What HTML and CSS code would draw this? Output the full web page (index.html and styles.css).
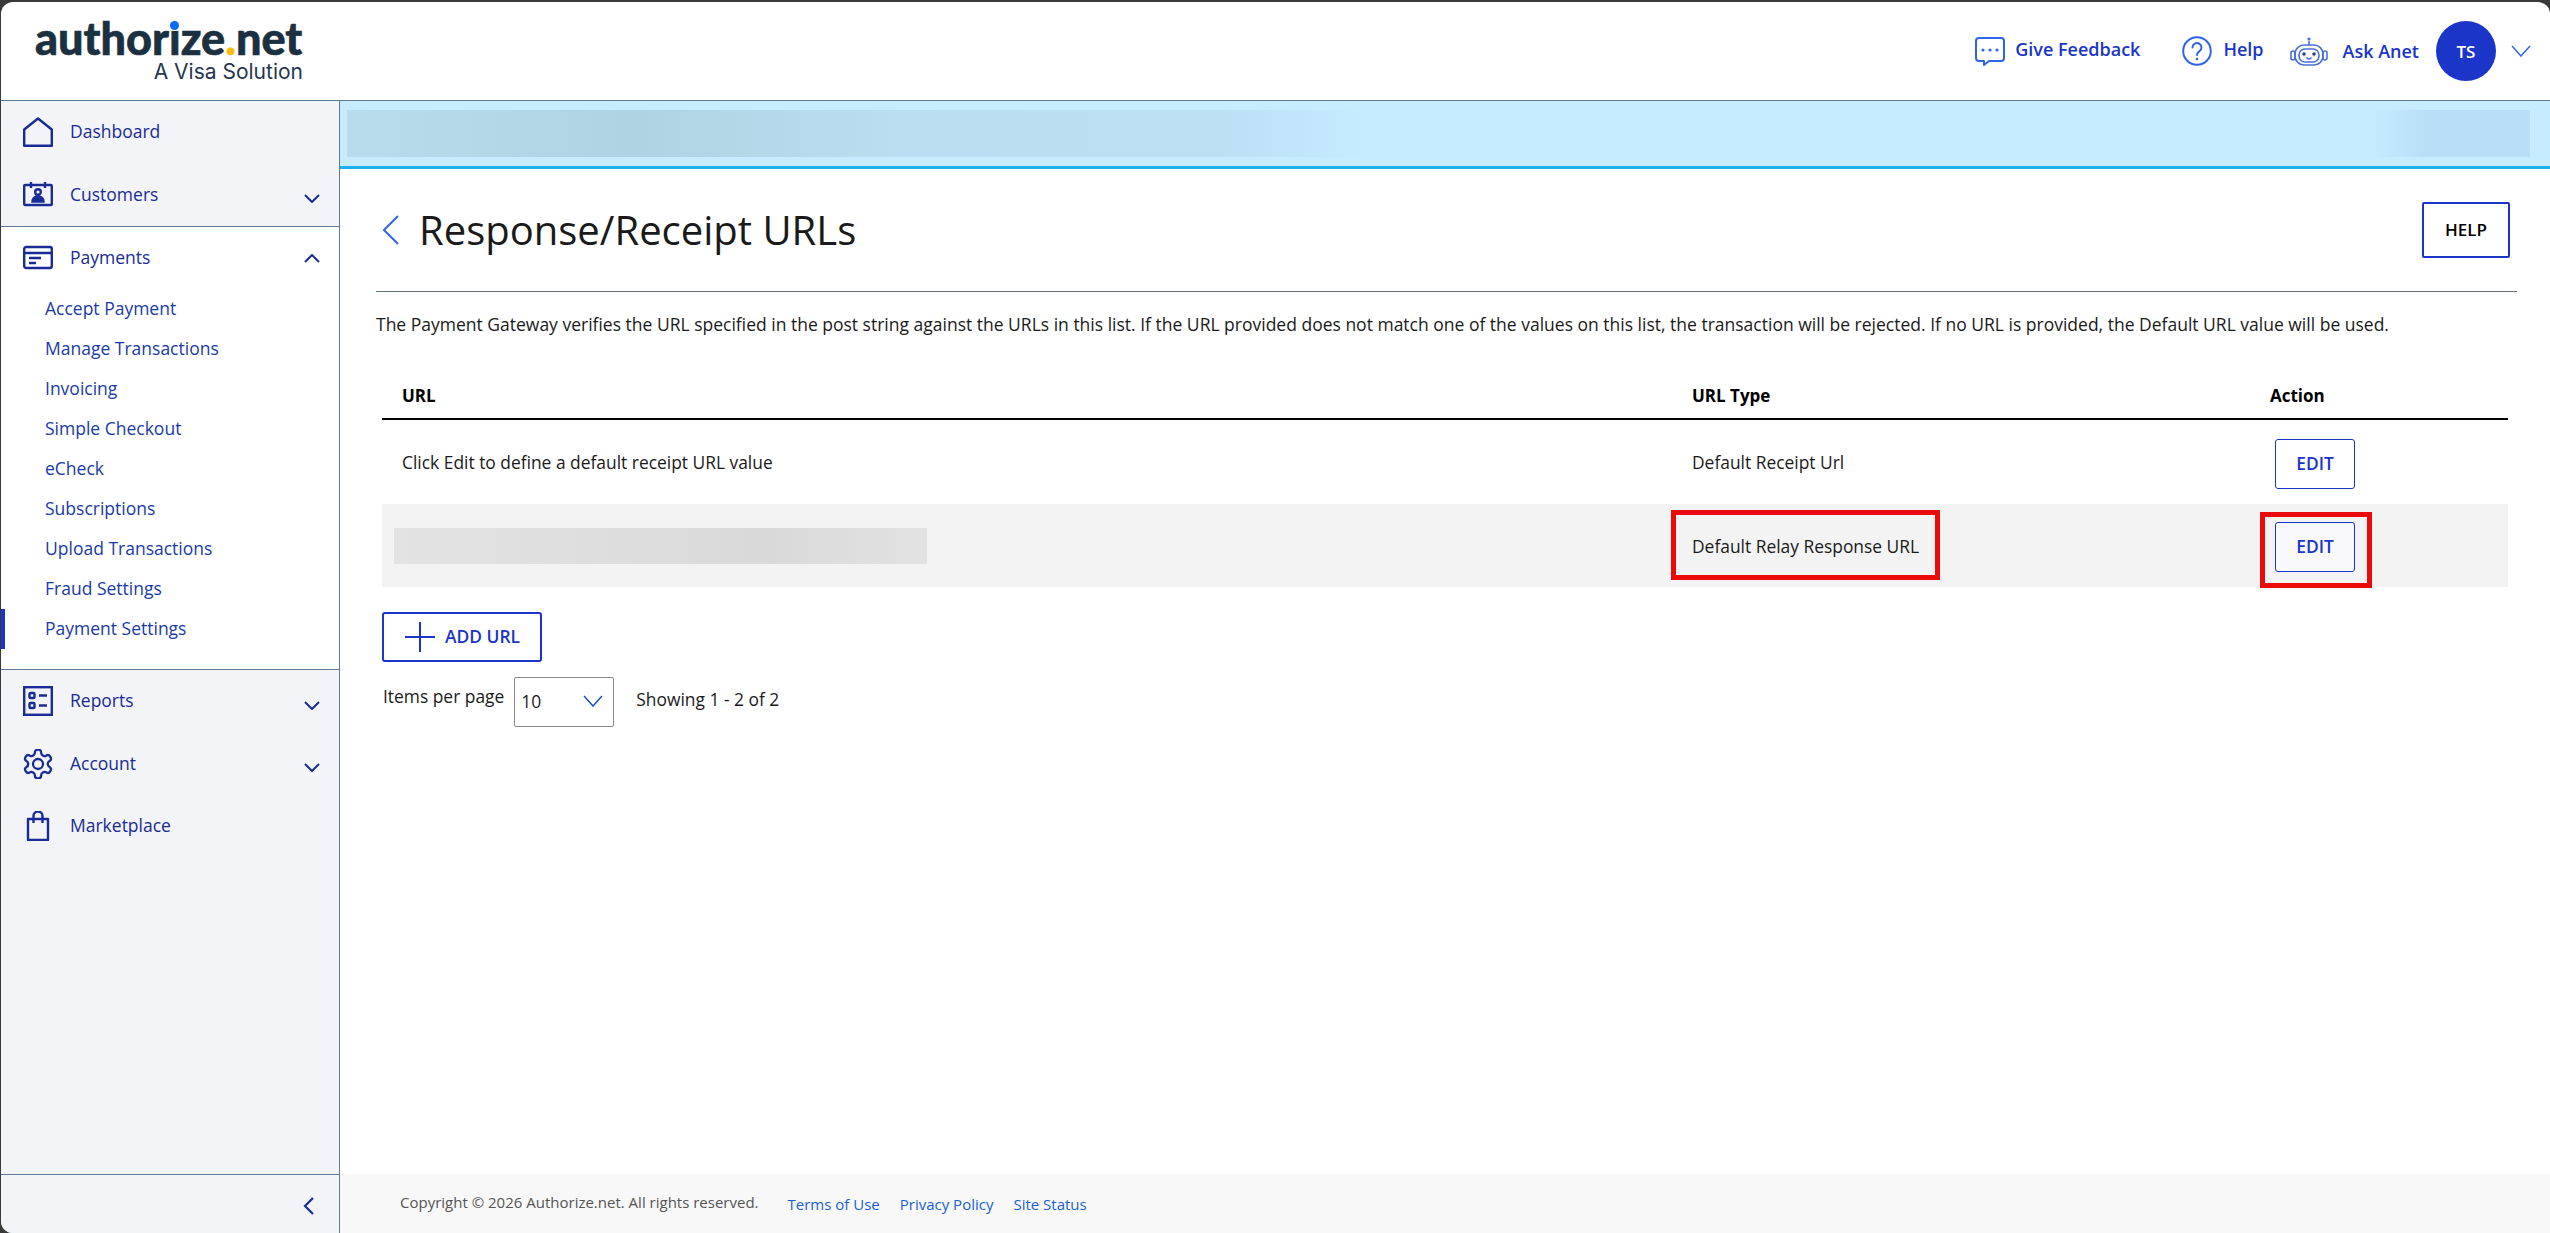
FILE: index.html
```html
<!DOCTYPE html>
<html lang="en">
<head>
<meta charset="UTF-8">
<title>Response/Receipt URLs</title>
<link rel="stylesheet" href="styles.css">
</head>
<body>
<div class="app">

    <!-- top header -->
    <header class="topbar">
        <div class="logo">
            <div class="logo-name">authorize<span class="logo-dot">.</span>net<i class="logo-idot"></i></div>
            <div class="logo-sub">A Visa Solution</div>
        </div>
        <div class="top-actions">
            <a class="top-link feedback">
                <svg class="top-icon" viewBox="0 0 30 30" fill="none" stroke="#2f63e8" stroke-width="2"><path d="M4 2h22a3 3 0 0 1 3 3v17a3 3 0 0 1-3 3H14l-5 4v-4H4a3 3 0 0 1-3-3V5a3 3 0 0 1 3-3z" stroke-linejoin="round"/><circle cx="8" cy="14" r="1.6" fill="#2f63e8" stroke="none"/><circle cx="15" cy="14" r="1.6" fill="#2f63e8" stroke="none"/><circle cx="22" cy="14" r="1.6" fill="#2f63e8" stroke="none"/></svg>
                <span>Give Feedback</span>
            </a>
            <a class="top-link help">
                <svg class="top-icon" viewBox="0 0 30 30" fill="none" stroke="#2f63e8" stroke-width="2"><circle cx="15" cy="15" r="13.8"/><path d="M10.5 11.5a4.5 4.5 0 1 1 6.8 3.9c-1.5.9-2.3 1.8-2.3 3.6" stroke-linecap="round"/><circle cx="15" cy="23" r="1.3" fill="#2f63e8" stroke="none"/></svg>
                <span>Help</span>
            </a>
            <a class="top-link anet">
                <svg class="robot" viewBox="0 0 38 30" fill="none" stroke="#4a6fd8" stroke-width="1.6"><circle cx="19" cy="3" r="1.6" fill="#4a6fd8" stroke="none"/><path d="M19 5v4"/><rect x="5" y="9" width="28" height="20" rx="9"/><rect x="9" y="13" width="20" height="13" rx="6"/><rect x="1" y="15" width="4" height="9" rx="2"/><rect x="33" y="15" width="4" height="9" rx="2"/><circle cx="14" cy="18" r="1.8" fill="#2a3f90" stroke="none"/><circle cx="24" cy="18" r="1.8" fill="#2a3f90" stroke="none"/><path d="M17 22c1 1.4 3 1.4 4 0" stroke-linecap="round"/></svg>
                <span>Ask Anet</span>
            </a>
            <div class="avatar">TS</div>
            <svg class="top-chevron" viewBox="0 0 20 12" fill="none" stroke="#2f63e8" stroke-width="1.5"><path d="M1 1l9 10 9-10"/></svg>
        </div>
    </header>

    <div class="body-row">

        <!-- left menu -->
        <nav class="sidebar">
            <div class="nav-group gray">
                <a class="nav-item">
                    <svg class="nav-icon" viewBox="0 0 30 30" fill="none" stroke="#1a2b96" stroke-width="2.4" stroke-linejoin="round"><path d="M1.200 12.500L15 1.500l13.800 11v16.300H1.200z"/></svg>
                    <span>Dashboard</span>
                </a>
                <a class="nav-item">
                    <svg class="nav-icon" viewBox="0 0 30 30" fill="none" stroke="#1a2b96" stroke-width="2.4"><rect x="1.2" y="5" width="27.6" height="20" rx="1"/><path d="M8 2v6M22 2v6"/><circle cx="15" cy="12" r="2.8"/><path d="M9.500 21.500c0-7 11-7 11 0z" fill="#1a2b96"/></svg>
                    <span>Customers</span>
                    <svg class="nav-chevron" viewBox="0 0 16 9" fill="none" stroke="#1a2b96" stroke-width="2"><path d="M1 1l7 7 7-7"/></svg>
                </a>
            </div>

            <div class="nav-group open">
                <a class="nav-item">
                    <svg class="nav-icon" viewBox="0 0 30 30" fill="none" stroke="#1a2b96" stroke-width="2.4"><rect x="1.2" y="4" width="27.6" height="21" rx="2"/><path d="M1.200 10h27.6M6 15h12M6 20h7"/></svg>
                    <span>Payments</span>
                    <svg class="nav-chevron up" viewBox="0 0 16 9" fill="none" stroke="#1a2b96" stroke-width="2"><path d="M1 8l7-7 7 7"/></svg>
                </a>
                <div class="sub-list">
                    <a class="sub-item">Accept Payment</a>
                    <a class="sub-item">Manage Transactions</a>
                    <a class="sub-item">Invoicing</a>
                    <a class="sub-item">Simple Checkout</a>
                    <a class="sub-item">eCheck</a>
                    <a class="sub-item">Subscriptions</a>
                    <a class="sub-item">Upload Transactions</a>
                    <a class="sub-item">Fraud Settings</a>
                    <a class="sub-item current">Payment Settings</a>
                </div>
            </div>

            <div class="nav-group gray rest">
                <a class="nav-item">
                    <svg class="nav-icon" viewBox="0 0 30 30" fill="none" stroke="#1a2b96" stroke-width="2.4"><rect x="1.2" y="1.2" width="27.6" height="27.6"/><rect x="6.500" y="7" width="5" height="5" rx="1"/><rect x="6.500" y="17" width="5" height="5" rx="1"/><path d="M16 9.500h8M16 19.500h8"/></svg>
                    <span>Reports</span>
                    <svg class="nav-chevron" viewBox="0 0 16 9" fill="none" stroke="#1a2b96" stroke-width="2"><path d="M1 1l7 7 7-7"/></svg>
                </a>
                <a class="nav-item">
                    <svg class="nav-icon" viewBox="1.500 1.500 21 21" fill="none" stroke="#1a2b96" stroke-width="1.6"><path d="M12.22 2h-.44a2 2 0 0 0-2 2v.18a2 2 0 0 1-1 1.73l-.43.25a2 2 0 0 1-2 0l-.15-.08a2 2 0 0 0-2.73.73l-.22.38a2 2 0 0 0 .73 2.73l.15.1a2 2 0 0 1 1 1.72v.51a2 2 0 0 1-1 1.74l-.15.09a2 2 0 0 0-.73 2.73l.22.38a2 2 0 0 0 2.73.73l.15-.08a2 2 0 0 1 2 0l.43.25a2 2 0 0 1 1 1.73V20a2 2 0 0 0 2 2h.44a2 2 0 0 0 2-2v-.18a2 2 0 0 1 1-1.73l.43-.25a2 2 0 0 1 2 0l.15.08a2 2 0 0 0 2.73-.73l.22-.39a2 2 0 0 0-.73-2.73l-.15-.08a2 2 0 0 1-1-1.74v-.5a2 2 0 0 1 1-1.74l.15-.09a2 2 0 0 0 .73-2.73l-.22-.38a2 2 0 0 0-2.73-.73l-.15.08a2 2 0 0 1-2 0l-.43-.25a2 2 0 0 1-1-1.73V4a2 2 0 0 0-2-2z"/><circle cx="12" cy="12" r="3.5"/></svg>
                    <span>Account</span>
                    <svg class="nav-chevron" viewBox="0 0 16 9" fill="none" stroke="#1a2b96" stroke-width="2"><path d="M1 1l7 7 7-7"/></svg>
                </a>
                <a class="nav-item">
                    <svg class="nav-icon" viewBox="0 0 30 30" fill="none" stroke="#1a2b96" stroke-width="2.4" stroke-linejoin="round"><path d="M5 8h20v21H5z"/><path d="M10.500 12V5a4.500 4.500 0 0 1 9 0v7"/></svg>
                    <span>Marketplace</span>
                </a>
            </div>

            <div class="collapse-row">
                <svg class="collapse-icon" viewBox="0 0 12 18" fill="none" stroke="#1a2b96" stroke-width="2.2"><path d="M10 1L2 9l8 8"/></svg>
            </div>
        </nav>

        <!-- page -->
        <main class="main">
            <div class="banner">
                <div class="blur-left"></div>
                <div class="blur-right"></div>
            </div>

            <section class="content">
                <div class="title-row">
                    <svg class="back" viewBox="0 0 18 30" fill="none" stroke="#2f63e8" stroke-width="2"><path d="M16 1L2 15l14 14"/></svg>
                    <h1>Response/Receipt URLs</h1>
                    <button class="btn-help">HELP</button>
                </div>
                <p class="intro">The Payment Gateway verifies the URL specified in the post string against the URLs in this list. If the URL provided does not match one of the values on this list, the transaction will be rejected. If no URL is provided, the Default URL value will be used.</p>

                <table class="url-table">
                    <thead>
                        <tr>
                            <th class="col-url">URL</th>
                            <th class="col-type">URL Type</th>
                            <th class="col-action">Action</th>
                        </tr>
                    </thead>
                    <tbody>
                        <tr>
                            <td>Click Edit to define a default receipt URL value</td>
                            <td>Default Receipt Url</td>
                            <td><button class="btn-edit">EDIT</button></td>
                        </tr>
                        <tr class="shaded">
                            <td><div class="blur-url"></div></td>
                            <td>Default Relay Response URL<span class="mark mark-type"></span></td>
                            <td><button class="btn-edit">EDIT</button><span class="mark mark-edit"></span></td>
                        </tr>
                    </tbody>
                </table>

                <button class="btn-add">
                    <svg class="plus" viewBox="0 0 30 30" fill="none" stroke="#1a35c8" stroke-width="2"><path d="M15 0v30M0 15h30"/></svg>
                    <span>ADD URL</span>
                </button>

                <div class="pager">
                    <span class="pager-label">Items per page</span>
                    <div class="pager-select">
                        <span>10</span>
                        <svg class="pager-chevron" viewBox="0 0 20 12" fill="none" stroke="#1a4fb8" stroke-width="1.5"><path d="M1 1l9 10 9-10"/></svg>
                    </div>
                    <span class="pager-count">Showing 1 - 2 of 2</span>
                </div>
            </section>

            <footer class="footer">
                <span class="copyright">Copyright © 2026 Authorize.net. All rights reserved.</span>
                <a>Terms of Use</a>
                <a>Privacy Policy</a>
                <a>Site Status</a>
            </footer>
        </main>
    </div>
</div>
</body>
</html>
```

FILE: styles.css
```css
* {
    box-sizing: border-box;
}

html, body {
    height: 100%;
}

body {
    margin: 0;
    padding: 2px 0 0 1px;
    background: #3a3a3a;
    font-family: "Open Sans", "Liberation Sans", sans-serif;
    font-size: 17px;
    color: #1a1a1a;
    overflow: hidden;
}

.app {
    height: 100%;
    display: flex;
    flex-direction: column;
    background: #fff;
    border-radius: 12px 12px 0 12px;
    overflow: hidden;
}

/* header */
.topbar {
    height: 99px;
    flex: none;
    display: flex;
    justify-content: space-between;
    border-bottom: 1px solid #5f7a94;
}

.logo {
    position: relative;
    width: 268px;
    margin-left: 34px;
    padding-top: 13px;
}

.logo-name {
    font-family: Lato, "Open Sans", sans-serif;
    font-weight: 900;
    font-size: 45px;
    line-height: 46px;
    color: #1b3040;
    -webkit-text-stroke: 0.6px #1b3040;
    white-space: nowrap;
}

.logo-dot {
    color: #fdbb0a;
    -webkit-text-stroke: 0.6px #fdbb0a;
}

.logo-idot {
    position: absolute;
    left: 135px;
    top: 19px;
    width: 9px;
    height: 9px;
    border-radius: 50%;
    background: #0a6cf0;
    box-shadow: 0 0 0 1px #fff;
}

.logo-sub {
    font-family: Inter, "Open Sans", sans-serif;
    font-size: 21px;
    line-height: 24px;
    text-align: right;
    color: #26364d;
    margin-top: -1px;
}

.top-actions {
    display: flex;
    align-items: center;
    padding-right: 19px;
}

.top-link {
    display: flex;
    align-items: center;
    font-weight: 600;
    font-size: 18px;
    color: #1a35c8;
}

.top-icon {
    width: 30px;
    height: 30px;
}

.feedback span,
.help span {
    margin-bottom: 4px;
}

.feedback {
    gap: 10px;
}

.help {
    gap: 11px;
    margin-left: 42px;
}

.anet {
    gap: 15px;
    margin-left: 26px;
}

.robot {
    width: 38px;
    height: 30px;
}

.avatar {
    width: 60px;
    height: 60px;
    margin-left: 17px;
    border-radius: 50%;
    background: #1a35c8;
    color: #fff;
    font-weight: 600;
    font-size: 17px;
    display: flex;
    align-items: center;
    justify-content: center;
}

.top-chevron {
    width: 20px;
    height: 12px;
    margin-left: 15px;
}

.body-row {
    flex: 1;
    display: flex;
    min-height: 0;
}

/* left menu */
.sidebar {
    width: 339px;
    flex: none;
    display: flex;
    flex-direction: column;
    border-right: 1px solid #5f7a94;
    background: #f2f4f8;
}

.nav-group {
    background: #fff;
}

.nav-group.gray {
    background: #f2f4f8;
}

.nav-group.open {
    border-top: 1px solid #5f7a94;
    border-bottom: 1px solid #5f7a94;
    height: 444px;
}

.nav-group.rest {
    flex: 1;
}

.nav-item {
    height: 62.5px;
    display: flex;
    align-items: center;
    padding: 0 19px 0 22px;
    color: #1a2b96;
    font-size: 17.5px;
}

.nav-item span {
    margin-top: -2px;
}

.nav-icon {
    width: 30px;
    height: 30px;
    flex: none;
    margin-right: 17px;
}

.nav-chevron {
    width: 16px;
    height: 9px;
    margin-left: auto;
    margin-top: 8px;
}

.nav-chevron.up {
    margin-top: 0;
}

.sub-list {
    margin-top: -1px;
}

.sub-item {
    display: block;
    height: 40px;
    line-height: 38px;
    padding-left: 44px;
    color: #1a3aa8;
    font-size: 17.5px;
    position: relative;
}

.sub-item.current::before {
    content: "";
    position: absolute;
    left: 0;
    top: 0;
    bottom: 0;
    width: 4px;
    background: #1a35c8;
}

.collapse-row {
    height: 59px;
    flex: none;
    border-top: 1px solid #5f7a94;
    display: flex;
    justify-content: flex-end;
    align-items: center;
    padding: 4px 24px 0 0;
}

.collapse-icon {
    width: 12px;
    height: 18px;
}

/* page */
.main {
    flex: 1;
    min-width: 0;
    display: flex;
    flex-direction: column;
}

.banner {
    height: 68px;
    flex: none;
    display: flex;
    justify-content: space-between;
    padding: 9px 20px 9px 7px;
    background: #c7ebff;
    border-bottom: 3px solid #1cb0f0;
}

.blur-left {
    width: 1020px;
    background: linear-gradient(90deg, #b9dcec 0%, #b0d3e4 28%, #bbdff0 55%, #bcdff2 85%, #c7ebff 100%);
}

.blur-right {
    width: 160px;
    background: linear-gradient(90deg, #c7ebff 0%, #b9dff8 35%, #b9dff8 100%);
}

.content {
    flex: 1;
    padding: 33px 33px 0 36px;
}

.title-row {
    height: 90px;
    display: flex;
    align-items: flex-start;
    border-bottom: 1px solid #5f6f80;
}

.back {
    width: 18px;
    height: 30px;
    margin: 13px 0 0 6px;
}

h1 {
    margin: 0 0 0 19px;
    font-weight: 400;
    font-size: 40px;
    line-height: 56px;
    color: #1a1a1a;
}

.btn-help {
    margin-left: auto;
    margin-right: 7px;
    width: 88px;
    height: 56px;
    padding-bottom: 2px;
    background: #fff;
    border: 2.5px solid #1a35c8;
    border-radius: 2px;
    font: 600 17px "Open Sans", sans-serif;
    color: #000;
}

.intro {
    margin: 20px 0 0;
    line-height: 24px;
    font-size: 17.5px;
    white-space: nowrap;
}

.url-table {
    width: 2126px;
    margin: 37px 0 0 6px;
    border-collapse: separate;
    border-spacing: 0;
    table-layout: fixed;
}

.url-table th {
    height: 47px;
    text-align: left;
    font-weight: 700;
    font-size: 17px;
    padding: 0 0 0 20px;
    border-bottom: 2px solid #000;
    color: #000;
}

.col-url { width: 1290px; }
.col-type { width: 578px; }
.col-action { width: 258px; }

.url-table td {
    position: relative;
    height: 84px;
    padding: 0 0 0 20px;
    font-size: 17.4px;
}

.url-table .shaded td {
    height: 83px;
    background: #f3f3f3;
}

.btn-edit {
    display: block;
    width: 80px;
    height: 50px;
    margin: 3px 0 0 5px;
    padding-bottom: 3px;
    background: #fff;
    border: 1.5px solid #1a35c8;
    border-radius: 3px;
    font: 600 17.4px "Open Sans", sans-serif;
    color: #1a35c8;
}

.shaded .btn-edit {
    background: #f9f9fb;
}

.blur-url {
    width: 533px;
    height: 36px;
    margin-left: -8px;
    background: linear-gradient(90deg, #e3e3e3, #d9d9d9 70%, #e2e2e2);
}

/* red annotation boxes */
.mark {
    position: absolute;
    border: 5px solid #ea0a0a;
}

.mark-type {
    left: -1px;
    top: 6px;
    width: 269px;
    height: 70px;
}

.mark-edit {
    left: 10px;
    top: 8px;
    width: 112px;
    height: 76px;
}

.btn-add {
    display: flex;
    align-items: center;
    gap: 10px;
    width: 160px;
    height: 50px;
    margin: 25px 0 0 6px;
    padding: 0 0 0 21px;
    background: #fff;
    border: 2.5px solid #1a35c8;
    border-radius: 3px;
    font: 600 17.4px "Open Sans", sans-serif;
    color: #1a35c8;
}

.btn-add span {
    margin-bottom: 3px;
}

.plus {
    width: 30px;
    height: 30px;
}

.pager {
    display: flex;
    align-items: center;
    margin: 15px 0 0 7px;
    font-size: 17.4px;
}

.pager-label {
    margin: -13px 10px 0 0;
}

.pager-select {
    width: 100px;
    height: 50px;
    padding: 0 10px 2px 6px;
    display: flex;
    align-items: center;
    justify-content: space-between;
    border: 1.5px solid #8c8885;
    border-radius: 2px;
}

.pager-chevron {
    width: 20px;
    height: 12px;
}

.pager-count {
    margin: -7px 0 0 22px;
}

.footer {
    height: 59px;
    flex: none;
    display: flex;
    align-items: center;
    background: #f8f8f9;
    padding: 0 0 0 60px;
    font-size: 15px;
}

.copyright {
    color: #555;
    margin: -4px 29px 0 0;
}

.footer a {
    color: #1a5fd8;
    margin-right: 20px;
}
```
